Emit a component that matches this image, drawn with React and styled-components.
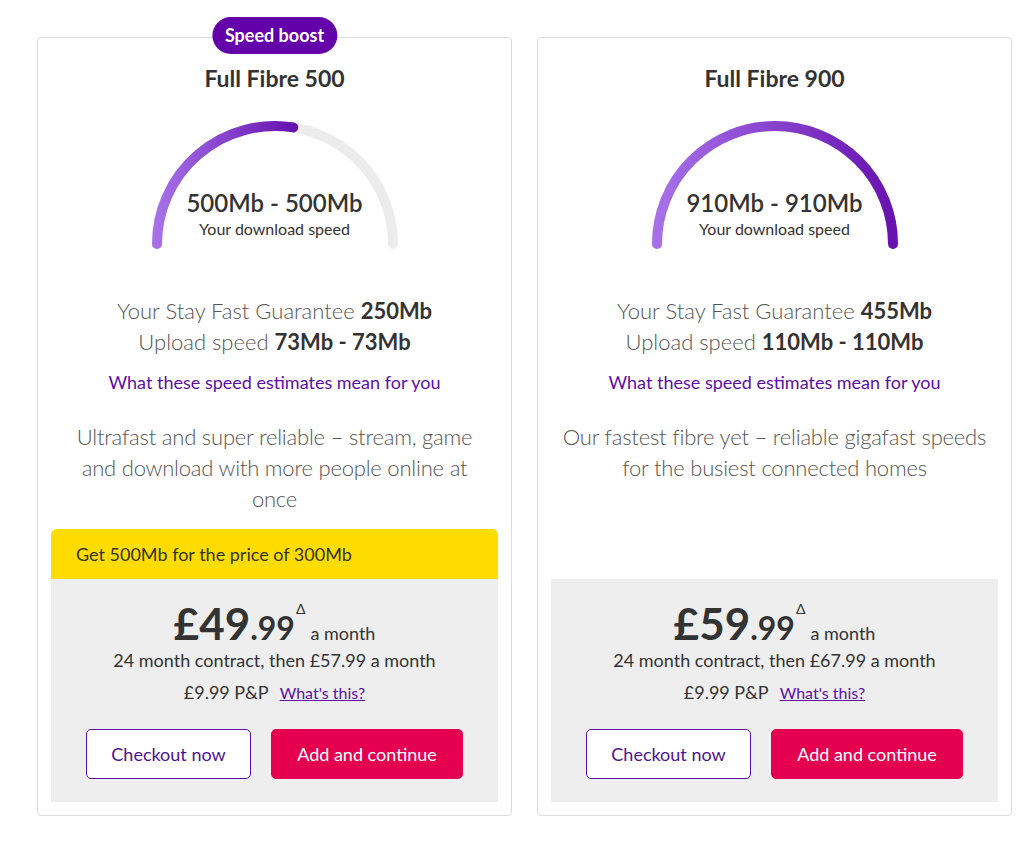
import React from "react";
import styled, { createGlobalStyle } from "styled-components";

const Global = createGlobalStyle`
  html, body { margin: 0; padding: 0; background: #ffffff; }
  body { font-family: Lato, "Open Sans", "Liberation Sans", sans-serif; color: #333; }
  * { box-sizing: border-box; }
`;

const Page = styled.div`
  display: grid;
  grid-template-columns: 475px 475px;
  column-gap: 25px;
  padding: 37px 0 30px 37px;
  align-items: stretch;
`;

const Card = styled.section`
  position: relative;
  display: flex;
  flex-direction: column;
  align-items: center;
  border: 1px solid #dcdcdc;
  border-radius: 4px;
  padding: 0 13px 13px;
`;

const Badge = styled.div`
  position: absolute;
  top: -21px;
  left: 50%;
  transform: translateX(-50%);
  height: 37px;
  padding: 0 13px;
  border-radius: 19px;
  background: #6400aa;
  color: #fff;
  font-size: 18px;
  font-weight: 700;
  line-height: 37px;
  white-space: nowrap;
`;

const Title = styled.h2`
  margin: 25px 0 0;
  font-size: 23px;
  line-height: 30px;
  font-weight: 700;
  color: #333;
`;

const GaugeWrap = styled.div`
  position: relative;
  width: 250px;
  height: 131px;
  margin-top: 27px;
`;

const GaugeSvg = styled.svg`
  display: block;
`;

const GaugeText = styled.div`
  position: absolute;
  left: 0;
  right: 0;
  top: 68px;
  text-align: center;
`;

const Speed = styled.div`
  font-size: 24px;
  line-height: 30px;
  font-weight: 600;
  color: #333;
`;

const SpeedLabel = styled.div`
  font-size: 16px;
  line-height: 22px;
  color: #333;
`;

const Stats = styled.div`
  margin-top: 44px;
  text-align: center;
  font-size: 22px;
  line-height: 31px;
  font-weight: 300;
  color: #555;
`;

const Strong = styled.strong`
  font-weight: 700;
  color: #333;
`;

const InfoLink = styled.a`
  margin-top: 13px;
  font-size: 18px;
  line-height: 24px;
  color: #5a0fa8;
  text-decoration: none;
`;

const Description = styled.p`
  margin: 27px 0 15px;
  padding: 0 8px;
  text-align: center;
  font-size: 22px;
  line-height: 31px;
  font-weight: 300;
  letter-spacing: -0.2px;
  color: #555;
`;

const Pricing = styled.div`
  margin-top: auto;
  align-self: stretch;
  display: flex;
  flex-direction: column;
`;

const Promo = styled.div`
  height: 50px;
  display: flex;
  align-items: center;
  padding-left: 25px;
  background: #fedc00;
  border-radius: 6px 6px 0 0;
  font-size: 18px;
  color: #333;
`;

const PriceBox = styled.div`
  background: #eeeeee;
  padding: 20px 0 23px;
  display: flex;
  flex-direction: column;
  align-items: center;
`;

const PriceLine = styled.div`
  display: flex;
  align-items: baseline;
  color: #333;
`;

const Pounds = styled.span`
  font-size: 44px;
  line-height: 48px;
  font-weight: 700;
`;

const Pence = styled.span`
  font-size: 32px;
  line-height: 34px;
  font-weight: 700;
`;

const Delta = styled.span`
  align-self: flex-start;
  font-size: 14px;
  line-height: 14px;
  margin-top: 3px;
  margin-left: 1px;
`;

const Per = styled.span`
  font-size: 18px;
  line-height: 20px;
  margin-left: 5px;
`;

const Contract = styled.div`
  font-size: 18px;
  line-height: 26px;
  color: #333;
`;

const Postage = styled.div`
  margin-top: 6px;
  display: flex;
  align-items: baseline;
  gap: 11px;
  font-size: 18px;
  line-height: 26px;
  color: #333;
`;

const SmallLink = styled.a`
  font-size: 16px;
  color: #5a0fa8;
  text-decoration: underline;
`;

const Buttons = styled.div`
  margin-top: 23px;
  display: flex;
  gap: 20px;
`;

const Button = styled.button`
  height: 50px;
  width: ${(p) => p.$w}px;
  border-radius: 5px;
  font-family: inherit;
  font-size: 18px;
  cursor: pointer;
  border: 1px solid ${(p) => (p.$primary ? "#e4004f" : "#5a0fa8")};
  background: ${(p) => (p.$primary ? "#e4004f" : "#ffffff")};
  color: ${(p) => (p.$primary ? "#ffffff" : "#4d1591")};
`;

const CX = 125;
const CY = 124;
const R = 118;

function Gauge({ id, fraction, speed }) {
  const a = Math.PI * (1 - fraction);
  const x = CX + R * Math.cos(a);
  const y = CY - R * Math.sin(a);
  return (
    <GaugeWrap>
      <GaugeSvg width="250" height="131" viewBox="0 0 250 131">
        <defs>
          <linearGradient id={id} x1="0" y1="0" x2="1" y2="0">
            <stop offset="0" stopColor="#a770e8" />
            <stop offset="1" stopColor="#6812b0" />
          </linearGradient>
        </defs>
        <path
          d={`M ${CX - R} ${CY} A ${R} ${R} 0 0 1 ${CX + R} ${CY}`}
          fill="none"
          stroke="#ececec"
          strokeWidth="10"
          strokeLinecap="round"
        />
        <path
          d={`M ${CX - R} ${CY} A ${R} ${R} 0 0 1 ${x.toFixed(2)} ${y.toFixed(2)}`}
          fill="none"
          stroke={`url(#${id})`}
          strokeWidth="10"
          strokeLinecap="round"
        />
      </GaugeSvg>
      <GaugeText>
        <Speed>{speed}</Speed>
        <SpeedLabel>Your download speed</SpeedLabel>
      </GaugeText>
    </GaugeWrap>
  );
}

const plans = [
  {
    id: "g500",
    badge: "Speed boost",
    title: "Full Fibre 500",
    fraction: 500 / 910,
    speed: "500Mb - 500Mb",
    guarantee: "250Mb",
    upload: "73Mb - 73Mb",
    description:
      "Ultrafast and super reliable – stream, game and download with more people online at once",
    promo: "Get 500Mb for the price of 300Mb",
    pounds: "£49",
    then: "£57.99",
  },
  {
    id: "g900",
    title: "Full Fibre 900",
    fraction: 1,
    speed: "910Mb - 910Mb",
    guarantee: "455Mb",
    upload: "110Mb - 110Mb",
    description:
      "Our fastest fibre yet – reliable gigafast speeds for the busiest connected homes",
    pounds: "£59",
    then: "£67.99",
  },
];

export default function App() {
  return (
    <>
      <Global />
      <Page>
        {plans.map((p) => (
          <Card key={p.id}>
            {p.badge && <Badge>{p.badge}</Badge>}
            <Title>{p.title}</Title>
            <Gauge id={p.id} fraction={p.fraction} speed={p.speed} />
            <Stats>
              <div>
                Your Stay Fast Guarantee <Strong>{p.guarantee}</Strong>
              </div>
              <div>
                Upload speed <Strong>{p.upload}</Strong>
              </div>
            </Stats>
            <InfoLink href="#">What these speed estimates mean for you</InfoLink>
            <Description>{p.description}</Description>
            <Pricing>
              {p.promo && <Promo>{p.promo}</Promo>}
              <PriceBox>
                <PriceLine>
                  <Pounds>{p.pounds}</Pounds>
                  <Pence>.99</Pence>
                  <Delta>Δ</Delta>
                  <Per>a month</Per>
                </PriceLine>
                <Contract>24 month contract, then {p.then} a month</Contract>
                <Postage>
                  <span>£9.99 P&amp;P</span>
                  <SmallLink href="#">What's this?</SmallLink>
                </Postage>
                <Buttons>
                  <Button $w={165}>Checkout now</Button>
                  <Button $w={192} $primary>
                    Add and continue
                  </Button>
                </Buttons>
              </PriceBox>
            </Pricing>
          </Card>
        ))}
      </Page>
    </>
  );
}
